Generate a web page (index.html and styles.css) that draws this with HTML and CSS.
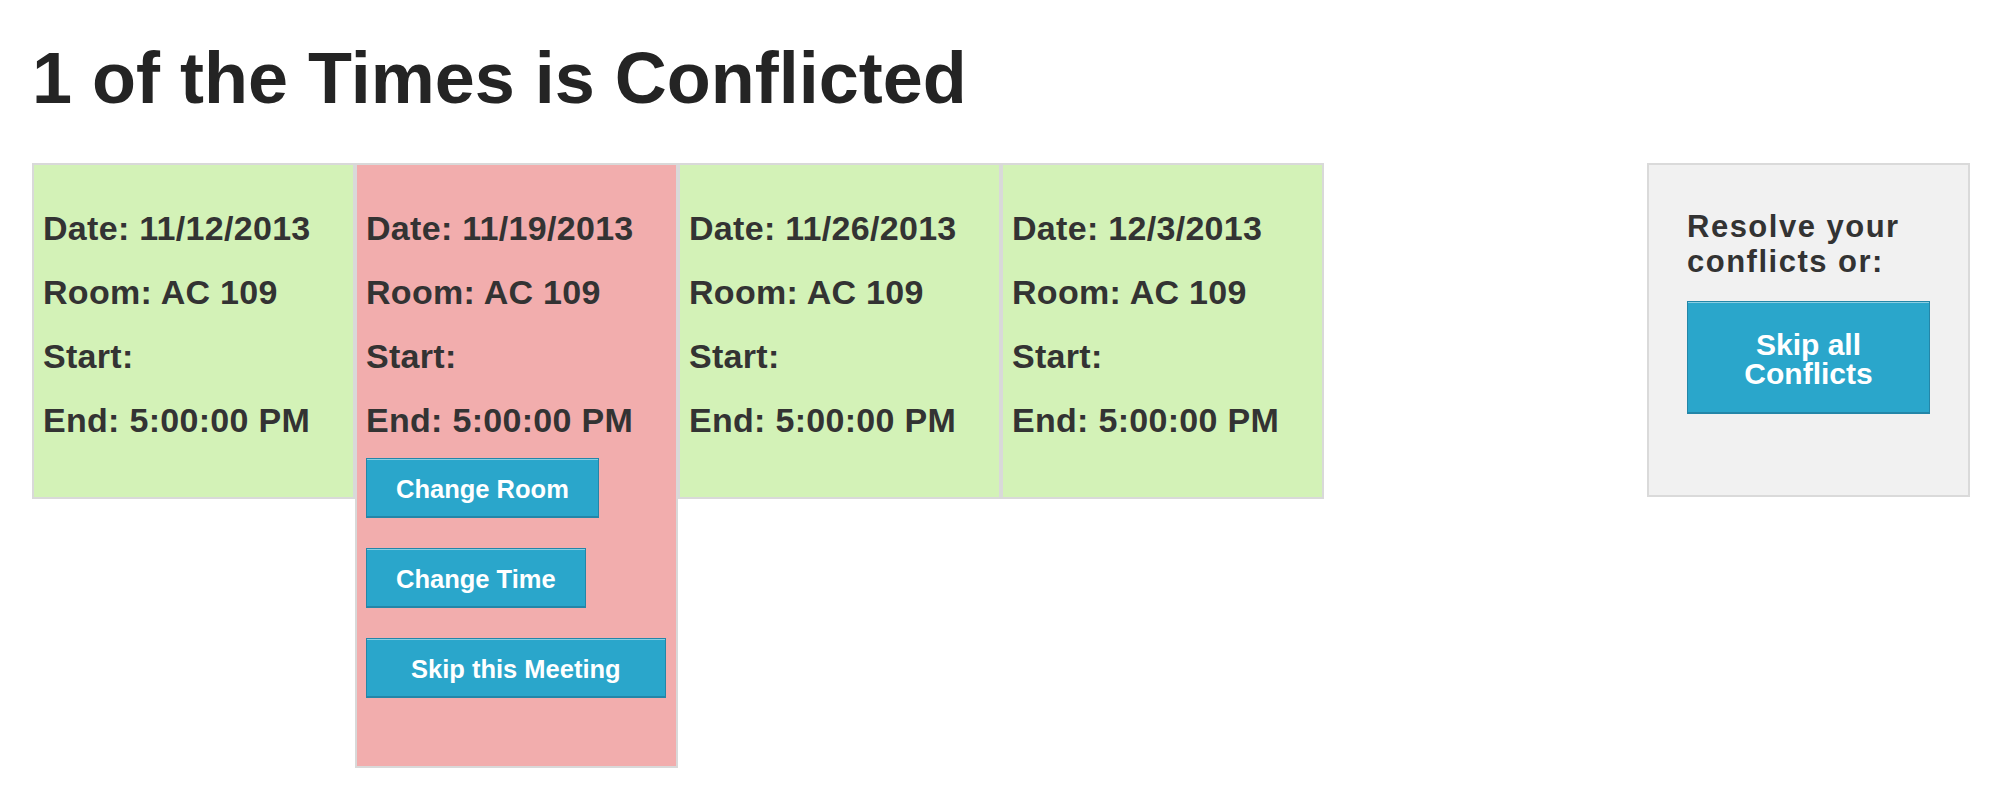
FILE: index.html
```html
<!DOCTYPE html>
<html lang="en">
<head>
<meta charset="utf-8">
<title>Conflicts</title>
<link rel="stylesheet" href="styles.css">
</head>
<body>
<div class="page">
  <h1 class="title">1 of the Times is Conflicted</h1>
  <div class="row">
    <div class="cards">
      <div class="card card-ok">
        <div class="line">Date: 11/12/2013</div>
        <div class="line">Room: AC 109</div>
        <div class="line">Start:</div>
        <div class="line">End: 5:00:00 PM</div>
      </div>
      <div class="card card-bad">
        <div class="line">Date: 11/19/2013</div>
        <div class="line">Room: AC 109</div>
        <div class="line">Start:</div>
        <div class="line">End: 5:00:00 PM</div>
        <div class="actions">
          <button class="btn">Change Room</button>
          <button class="btn">Change Time</button>
          <button class="btn btn-wide">Skip this Meeting</button>
        </div>
      </div>
      <div class="card card-ok">
        <div class="line">Date: 11/26/2013</div>
        <div class="line">Room: AC 109</div>
        <div class="line">Start:</div>
        <div class="line">End: 5:00:00 PM</div>
      </div>
      <div class="card card-ok">
        <div class="line">Date: 12/3/2013</div>
        <div class="line">Room: AC 109</div>
        <div class="line">Start:</div>
        <div class="line">End: 5:00:00 PM</div>
      </div>
    </div>
    <div class="side">
      <div class="side-text">Resolve your conflicts or:</div>
      <button class="btn btn-block">Skip all Conflicts</button>
    </div>
  </div>
</div>
</body>
</html>
```
FILE: styles.css
```css
* { box-sizing: border-box; }
html, body { margin: 0; padding: 0; background: #fff; }
body { font-family: "Liberation Sans", Arial, sans-serif; color: #333; }

.page { padding: 37px 29px 0 32px; }

.title {
  margin: 0 0 44px 0;
  font-size: 72px;
  line-height: 82px;
  font-weight: bold;
  color: #242424;
  white-space: nowrap;
}

.row {
  display: flex;
  justify-content: space-between;
  align-items: flex-start;
}

.cards { display: flex; align-items: flex-start; }

.card {
  width: 323px;
  border: 2px solid #d9d9d9;
  padding: 31px 9px 45px 9px;
}
.card-ok { background: #d3f2b7; }
.card-bad { background: #f2adad; }

.line {
  font-size: 34px;
  line-height: 64px;
  font-weight: bold;
  letter-spacing: 0.3px;
  white-space: nowrap;
  color: #333;
}

.actions {
  display: flex;
  flex-direction: column;
  align-items: flex-start;
  gap: 30px;
  margin: 6px 0 23px 0;
}

.btn {
  font-family: "Liberation Sans", Arial, sans-serif;
  font-size: 25.5px;
  line-height: 28px;
  font-weight: bold;
  color: #fff;
  background: #2aa6cb;
  border: 1px solid #2386a8;
  border-bottom-width: 2px;
  box-shadow: inset 0 1px 0 rgba(255, 255, 255, 0.45);
  padding: 16px 29px 13px 29px;
  margin: 0;
  border-radius: 0;
  cursor: pointer;
}
.btn-wide { padding-left: 44px; padding-right: 44px; }

.side {
  width: 323px;
  height: 334px;
  background: #f1f1f1;
  border: 2px solid #dadada;
  padding: 44px 38px 0 38px;
}
.side-text {
  font-size: 31px;
  line-height: 35px;
  font-weight: bold;
  letter-spacing: 1.5px;
  color: #333;
}
.btn-block {
  display: block;
  width: 100%;
  margin-top: 22px;
  font-size: 30px;
  line-height: 29px;
  padding: 28px 10px 24px 10px;
  text-align: center;
}
```
